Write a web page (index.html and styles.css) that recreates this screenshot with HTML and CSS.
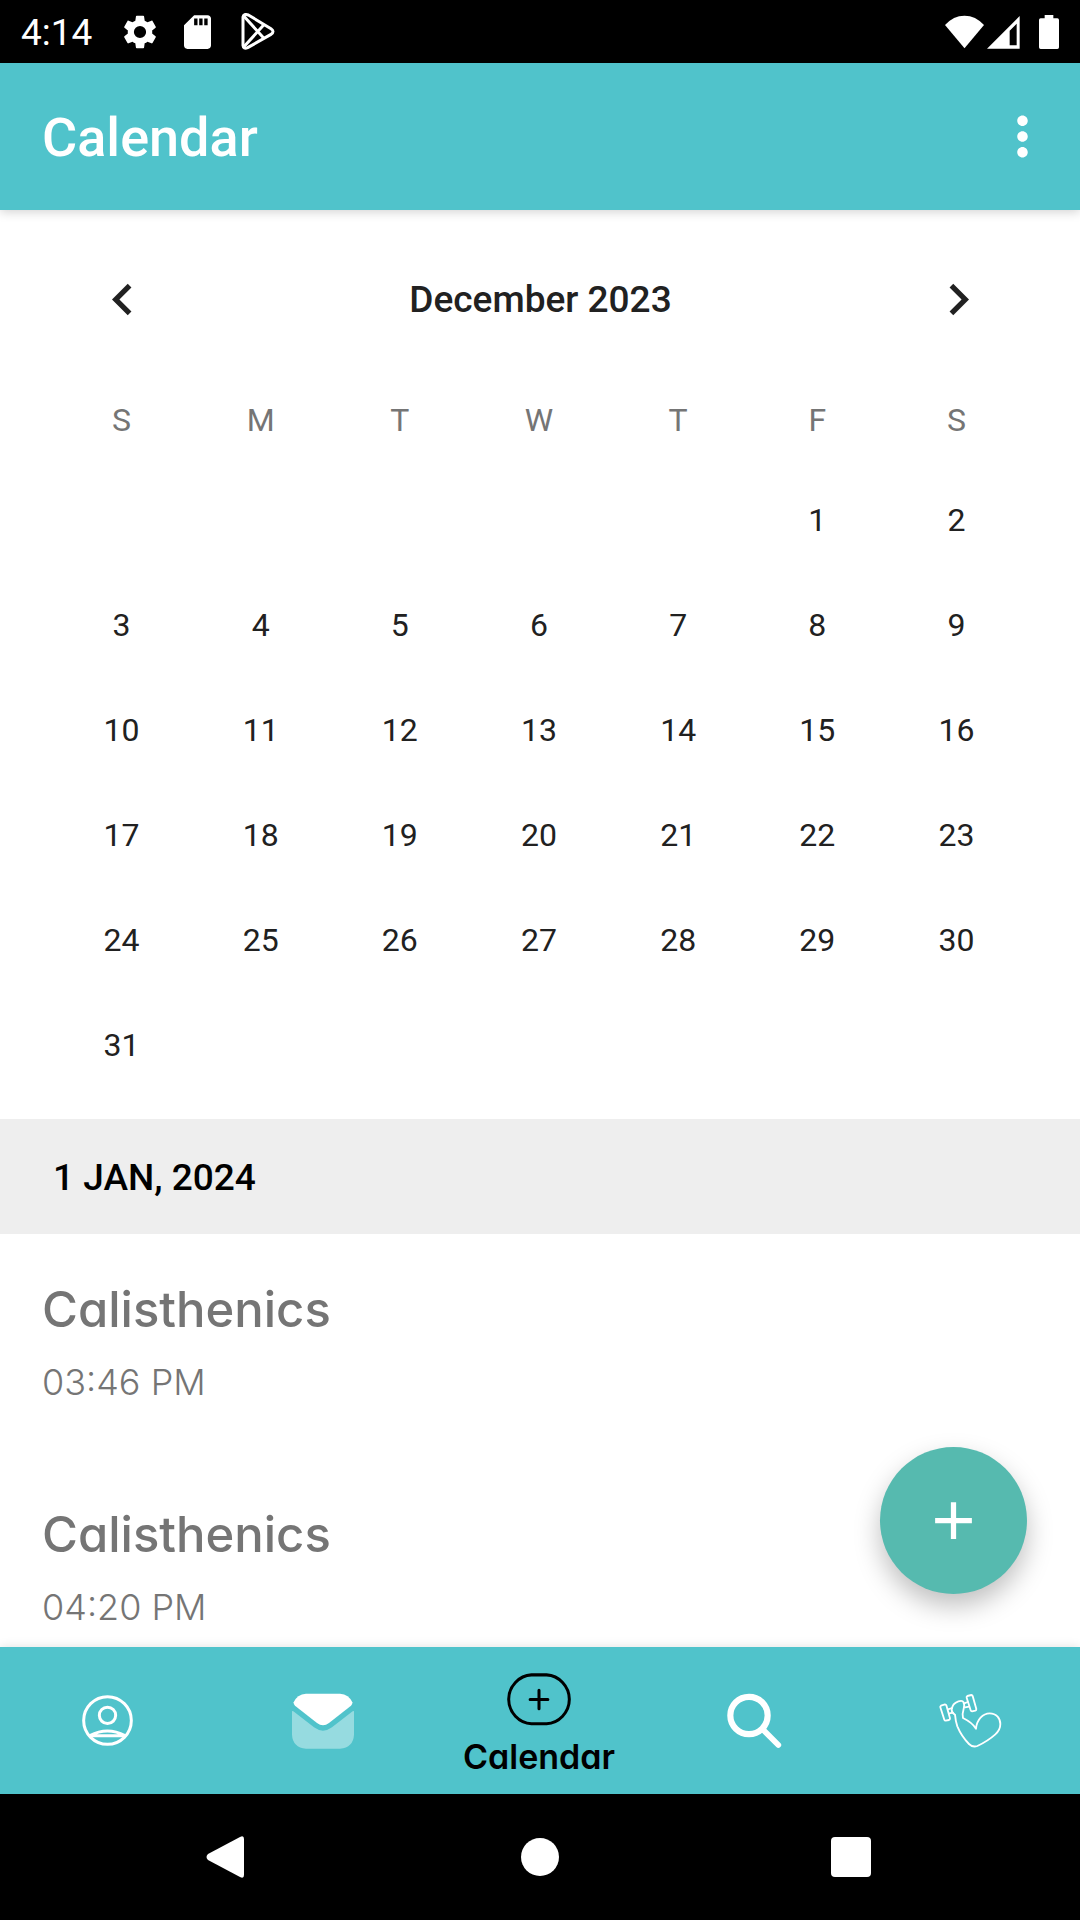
FILE: index.html
```html
<!DOCTYPE html>
<html lang="en">
<head>
<meta charset="utf-8">
<meta name="viewport" content="width=device-width, initial-scale=1">
<title>Calendar</title>
<link rel="stylesheet" href="styles.css">
</head>
<body>
<div class="status">
  <div class="status-left">
    <span class="clock">4:14</span>
    <svg class="gear" width="34" height="34" viewBox="2 2 20 20"><path fill="#fff" d="M19.14 12.94c.04-.3.06-.61.06-.94 0-.32-.02-.64-.07-.94l2.03-1.58c.18-.14.23-.41.12-.61l-1.92-3.32c-.12-.22-.37-.29-.59-.22l-2.39.96c-.5-.38-1.03-.7-1.62-.94L14.400 2.810c-.04-.24-.24-.41-.48-.41h-3.840c-.24 0-.43.17-.47.41L9.250 5.350C8.660 5.590 8.120 5.920 7.630 6.290L5.240 5.330c-.22-.08-.47 0-.59.22L2.740 8.870c-.12.21-.08.47.12.61l2.030 1.580C4.840 11.360 4.800 11.690 4.800 12s.02.64.07.94l-2.030 1.580c-.18.14-.23.41-.12.61l1.920 3.320c.12.22.37.29.59.22l2.390-.96c.5.38 1.030.7 1.620.94l.36 2.540c.05.24.24.41.48.41h3.840c.24 0 .44-.17.47-.41l.36-2.540c.59-.24 1.130-.56 1.620-.94l2.390.96c.22.08.47 0 .59-.22l1.920-3.320c.12-.22.07-.47-.12-.61L19.140 12.940zM12 15.6A3.600 3.600 0 1 1 12 8.400a3.600 3.600 0 0 1 0 7.200z"/></svg>
    <svg class="sd" width="27" height="34" viewBox="4 2 16 20"><path fill="#fff" d="M18 2h-8L4 8v12c0 1.100.9 2 2 2h12c1.100 0 2-.9 2-2V4c0-1.100-.9-2-2-2zm-6 6h-2V4h2v4zm3 0h-2V4h2v4zm3 0h-2V4h2v4z"/></svg>
    <svg class="play" width="34" height="37" viewBox="725 40 102 111"><g fill="none" stroke="#fff" stroke-width="9" stroke-linejoin="round"><path d="M731 52V137Q732 149 745 144L815 104Q827 95 815 87L747 46Q733 41 731 52Z"/><path d="M733 49L793 115M733 142L793 76"/></g></svg>
  </div>
  <div class="status-right">
    <svg width="39" height="34" viewBox="135 41 117 100"><path fill="#fff" d="M193.500 140L135 70Q160 42 193.500 42T252 70Z"/></svg>
    <svg width="33" height="34" viewBox="262 41 99 100"><path fill="#fff" fill-rule="evenodd" d="M262 141L360 43V141ZM330 87V131H351V66Z"/></svg>
    <svg class="battery" width="20" height="34" viewBox="417 42 60 102"><path fill="#fff" d="M434 42h26v10h12q5 0 5 5v82q0 5-5 5h-50q-5 0-5-5V57q0-5 5-5h12z"/></svg>
  </div>
</div>

<header class="appbar">
  <h1>Calendar</h1>
  <button class="icon-btn" aria-label="More options">
    <svg width="63" height="63" viewBox="0 0 24 24"><path fill="#fff" d="M12 8c1.100 0 2-.9 2-2s-.9-2-2-2-2 .9-2 2 .9 2 2 2zm0 2c-1.100 0-2 .9-2 2s.9 2 2 2 2-.9 2-2-.9-2-2-2zm0 6c-1.100 0-2 .9-2 2s.9 2 2 2 2-.9 2-2-.9-2-2-2z"/></svg>
  </button>
</header>

<main class="content">
  <section class="calendar">
    <div class="month">
      <button class="icon-btn" aria-label="Previous month"><svg width="63" height="63" viewBox="0 0 24 24"><path fill="#212121" d="M15.410 7.410L14 6l-6 6 6 6 1.410-1.410L10.830 12z"/></svg></button>
      <h2>December 2023</h2>
      <button class="icon-btn" aria-label="Next month"><svg width="63" height="63" viewBox="0 0 24 24"><path fill="#212121" d="M10 6L8.590 7.410 13.170 12l-4.580 4.590L10 18l6-6z"/></svg></button>
    </div>
    <table>
      <thead><tr><th>S</th><th>M</th><th>T</th><th>W</th><th>T</th><th>F</th><th>S</th></tr></thead>
      <tbody>
        <tr><td></td><td></td><td></td><td></td><td></td><td>1</td><td>2</td></tr>
        <tr><td>3</td><td>4</td><td>5</td><td>6</td><td>7</td><td>8</td><td>9</td></tr>
        <tr><td>10</td><td>11</td><td>12</td><td>13</td><td>14</td><td>15</td><td>16</td></tr>
        <tr><td>17</td><td>18</td><td>19</td><td>20</td><td>21</td><td>22</td><td>23</td></tr>
        <tr><td>24</td><td>25</td><td>26</td><td>27</td><td>28</td><td>29</td><td>30</td></tr>
        <tr><td>31</td><td></td><td></td><td></td><td></td><td></td><td></td></tr>
      </tbody>
    </table>
  </section>

  <h2 class="day">1 JAN, 2024</h2>
  <ul class="events">
    <li><h3>Calisthenics</h3><p>03:46 PM</p></li>
    <li><h3>Calisthenics</h3><p>04:20 PM</p></li>
  </ul>

  <button class="fab" aria-label="Add event">
    <svg width="63" height="63" viewBox="0 0 24 24"><path fill="#fff" d="M19 13h-6v6h-2v-6H5v-2h6V5h2v6h6z"/></svg>
  </button>
</main>

<nav class="tabs">
  <a href="#profile" aria-label="Profile">
    <svg width="51" height="51" viewBox="246 645 153 153"><g fill="none" stroke="#fff" stroke-width="9"><circle cx="322.500" cy="721.500" r="71.500"/><circle cx="322.500" cy="706" r="24.500"/><path d="M270 767Q322 739 375 767Z"/></g></svg>
  </a>
  <a href="#messages" aria-label="Messages">
    <svg width="62" height="56" viewBox="876 637 186 168"><path fill="#fff" fill-opacity=".4" d="M876 692Q878 690 883 694L942 740Q969 760 996 740L1055 694Q1060 690 1062 692V762Q1060 800 1020 804H918Q878 800 876 762Z"/><path fill="#fff" d="M918 639H1020Q1047 641 1057 665Q1058 671 1053 675L987 727Q969 741 951 727L885 675Q880 671 881 665Q891 641 918 639Z"/></svg>
  </a>
  <a href="#calendar" class="active" aria-current="page">
    <svg width="64" height="53" viewBox="203 100 191 157"><g fill="none" stroke="#000" stroke-width="9"><path d="M276 105H321C358 107 389 139 389 178S358 249 321 251H276C239 249 208 217 208 178S239 107 276 105Z"/><path stroke-linecap="round" d="M298.500 151V206M272 178.500H325"/></g></svg>
    <span>Calendar</span>
  </a>
  <a href="#search" aria-label="Search">
    <svg width="55" height="56" viewBox="85 98 165 168"><g fill="none" stroke="#fff"><circle cx="151" cy="165.500" r="56" stroke-width="18.500"/><path stroke-width="17" stroke-linecap="round" d="M192 207L239 254"/></g></svg>
  </a>
  <a href="#workouts" aria-label="Workouts">
    <svg width="64" height="56" viewBox="715 95 192 168"><g fill="none" stroke="#fff" stroke-width="5.500" stroke-linejoin="round" stroke-linecap="round"><path d="M724 133L736 129Q739 129 740 132L751 171Q751 175 748 176L738 178Q735 178 734 175L722 138Q721 135 724 133ZM803 104L815 101Q818 101 819 104L830 143Q830 147 827 148L817 150Q814 150 813 147L801 109Q800 106 803 104Z"/><path d="M745 144L757 140M750 156L760 154M794 126L804 122M796 138L808 136"/><path d="M766 160Q756 154 756 145Q758 126 776 120Q789 117 791 122Q796 130 792 142Q787 158 790 170Q818 184 829 202C831 175 850 156 870 156C891 156 902 171 902 188C902 202 896 211 887 219Q866 238 833 254Q819 259 808 248Q785 224 773 195Q768 182 766 160"/></g></svg>
  </a>
</nav>

<div class="sysnav">
  <button aria-label="Back"><svg width="46" height="42" viewBox="0 0 46 42"><path fill="#fff" d="M2 18L34 1Q38-1 38 3V39Q38 43 34 41L2 24Q-1 21 2 18Z"/></svg></button>
  <button aria-label="Home"><svg width="40" height="40" viewBox="0 0 40 40"><circle cx="20" cy="20" r="19" fill="#fff"/></svg></button>
  <button aria-label="Recent apps"><svg width="40" height="40" viewBox="0 0 40 40"><rect width="40" height="40" rx="4" fill="#fff"/></svg></button>
</div>
</body>
</html>
```
FILE: styles.css
```css
* { box-sizing: border-box; }
body {
  margin: 0;
  height: 100vh;
  display: flex;
  flex-direction: column;
  background: #fff;
  color: #212121;
  font-family: Roboto, "Liberation Sans", sans-serif;
}
svg { display: block; flex: none; }
h1, h2, h3, p, ul { margin: 0; padding: 0; }
button { border: 0; padding: 0; background: none; cursor: pointer; }

.status {
  flex: none;
  height: 63px;
  padding: 0 21px;
  display: flex;
  align-items: center;
  justify-content: space-between;
  background: #000;
  color: #fff;
}
.status-left, .status-right { display: flex; align-items: center; }
.clock { padding-top: 2px; font-size: 37px; line-height: 44px; }
.gear { margin-left: 31px; }
.sd { margin-left: 27px; }
.play { margin-left: 30px; }
.status-right { gap: 3px; }
.battery { margin-left: 16px; }

.appbar {
  flex: none;
  height: 147px;
  padding: 0 26px 0 42px;
  display: flex;
  align-items: center;
  justify-content: space-between;
  background: #50c3cb;
  color: #fff;
  box-shadow: 0 2px 10px rgba(0, 0, 0, .18);
  z-index: 1;
}
.appbar h1 { padding-top: 3px; font-size: 54px; font-weight: 500; line-height: 62px; }

.content {
  position: relative;
  flex: 1;
  min-height: 0;
  overflow: hidden;
}
.calendar { padding: 26px 54px 22px 52px; }
.month {
  height: 126px;
  margin-bottom: 10px;
  padding: 0 36px 0 39px;
  display: flex;
  align-items: center;
  justify-content: space-between;
}
.month h2, .day { font-size: 37px; font-weight: 500; line-height: 44px; }
.month h2 { padding-top: 2px; }
table { width: 100%; table-layout: fixed; border-collapse: collapse; }
th, td { padding: 0; text-align: center; font-size: 32px; line-height: 38px; font-weight: 400; }
th { height: 95px; color: #757575; }
td { height: 105px; }

.day { padding: 37px 53px 34px; background: #eee; color: #000; }
.events { list-style: none; color: #757575; font-family: Inter, "Noto Sans", sans-serif; font-feature-settings: "cv11"; }
.events li { height: 225px; padding: 41px 42px; }
.events h3 { font-size: 49px; font-weight: 500; line-height: 70px; }
.events p { margin-top: 9px; font-size: 36px; font-weight: 300; line-height: 56px; }

.fab {
  position: absolute;
  right: 53px;
  bottom: 53px;
  width: 147px;
  height: 147px;
  display: grid;
  place-items: center;
  border-radius: 50%;
  background: #56baaf;
  box-shadow: 0 12px 26px rgba(0, 0, 0, .25);
}

.tabs {
  flex: none;
  height: 147px;
  padding-right: 2px;
  display: grid;
  grid-template-columns: repeat(5, 1fr);
  background: #50c3cb;
  box-shadow: 0 0 10px rgba(0, 0, 0, .12);
  z-index: 1;
}
.tabs a {
  display: flex;
  flex-direction: column;
  align-items: center;
  justify-content: center;
  gap: 9px;
  color: #000;
  text-decoration: none;
}
.tabs .active { padding-top: 10px; }
.tabs span {
  font: 600 34px/44px Inter, "Noto Sans", sans-serif;
  font-feature-settings: "cv11";
}

.sysnav {
  flex: none;
  height: 126px;
  padding: 0 73px;
  display: grid;
  grid-template-columns: repeat(3, 1fr);
  background: #000;
}
.sysnav button { display: grid; place-items: center; }
```
